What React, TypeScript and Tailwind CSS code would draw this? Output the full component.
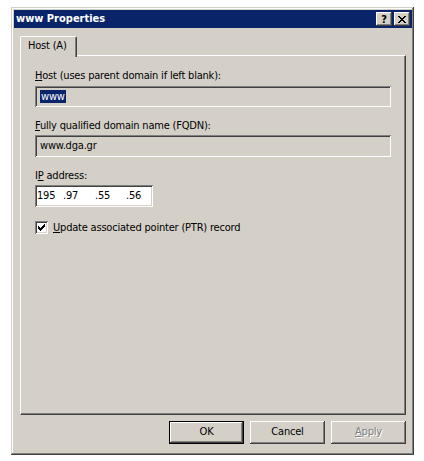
import React from 'react'

const raised =
  'shadow-[inset_-1px_-1px_#404040,inset_1px_1px_#ffffff,inset_-2px_-2px_#808080,inset_2px_2px_#d4d0c8]'
const sunken =
  'shadow-[inset_1px_1px_#808080,inset_-1px_-1px_#ffffff,inset_2px_2px_#404040,inset_-2px_-2px_#d4d0c8]'

function Label({ pre = '', k, rest }: { pre?: string; k: string; rest: string }) {
  return (
    <div className='h-[13px] leading-[13px] text-black whitespace-nowrap'>
      {pre}
      <span className='underline underline-offset-[1px]'>{k}</span>
      {rest}
    </div>
  )
}

export default function App() {
  return (
    <div className="w-[424px] h-[461px] bg-white overflow-hidden font-['DejaVu_Sans_Condensed','Liberation_Sans',Arial,sans-serif] text-[11px] tracking-[-0.2px] text-black">
      <div className='ml-[11px] mt-[7px] w-[403px] h-[448px] bg-[#d4d0c8] p-[3px] flex flex-col shadow-[inset_-1px_-1px_#404040,inset_1px_1px_#d4d0c8,inset_-2px_-2px_#808080,inset_2px_2px_#ffffff]'>
        {/* Title bar */}
        <div className='h-[18px] w-[398px] bg-[#0a246a] flex items-center pl-[2px] pr-[2px]'>
          <span className='text-white font-bold text-[11px] tracking-[0px] leading-[18px] flex-1'>www Properties</span>
          <div className={`w-[16px] h-[14px] bg-[#d4d0c8] ${raised} flex items-center justify-center font-bold text-[11px] tracking-normal leading-none`}>
            ?
          </div>
          <div className={`ml-[2px] w-[16px] h-[14px] bg-[#d4d0c8] ${raised} flex items-center justify-center`}>
            <svg width='8' height='7' viewBox='0 0 8 7'>
              <path d='M0 0h2v1h1v1h2V1h1V0h2v1H7v1H6v1H5v1h1v1h1v1h1v1H6V6H5V5H3v1H2v1H0V6h1V5h1V4h1V3H2V2H1V1H0z' fill='#000' />
            </svg>
          </div>
        </div>

        {/* Body */}
        <div className='pl-[6px] pt-[8px] flex flex-col'>
          {/* Tabs */}
          <div className='flex h-[20px] relative z-10 -mb-[1px]'>
            <div className='w-[57px] h-[21px] bg-[#d4d0c8] border-l border-t border-white border-r border-r-[#404040] rounded-tl-[2px] rounded-tr-[2px] pl-[7px] leading-[18px] whitespace-nowrap shadow-[inset_-1px_0_#808080]'>
              Host (A)
            </div>
          </div>

          {/* Panel */}
          <div className='w-[386px] h-[360px] border-t border-l border-white border-r border-b border-r-[#404040] border-b-[#404040] shadow-[inset_-1px_-1px_#808080] pl-[14px] pt-[13px] flex flex-col'>
            <Label k='H' rest='ost (uses parent domain if left blank):' />
            <div className={`mt-[4px] w-[356px] h-[21px] bg-[#d4d0c8] ${sunken} flex items-center pl-[5px]`}>
              <span className='bg-[#0a246a] text-white leading-[13px] px-[1px]'>www</span>
            </div>

            <div className='mt-[12px]'>
              <Label k='F' rest='ully qualified domain name (FQDN):' />
            </div>
            <div className={`mt-[3px] w-[356px] h-[22px] bg-[#d4d0c8] ${sunken} flex items-center pl-[5px]`}>
              www.dga.gr
            </div>

            <div className='mt-[12px]'>
              <Label pre='I' k='P' rest=' address:' />
            </div>
            <div className={`mt-[3px] w-[118px] h-[22px] bg-white ${sunken} flex items-center pl-[2px]`}>
              <span className='w-[26px]'>195</span>
              <span className='w-[3px]'>.</span>
              <span className='w-[29px]'>97</span>
              <span className='w-[3px]'>.</span>
              <span className='w-[28px]'>55</span>
              <span className='w-[3px]'>.</span>
              <span>56</span>
            </div>

            <div className='mt-[14px] flex items-center h-[13px]'>
              <div className={`w-[13px] h-[13px] bg-white ${sunken} flex items-center justify-center`}>
                <svg width='7' height='7' viewBox='0 0 7 7'>
                  <path d='M0 2h1v1h1v1h1V3h1V2h1V1h1V0h1v3H6v1H5v1H4v1H3v1H2V6H1V5H0z' fill='#000' />
                </svg>
              </div>
              <span className='ml-[5px] leading-[13px] whitespace-nowrap'>
                <span className='underline underline-offset-[1px]'>U</span>pdate associated pointer (PTR) record
              </span>
            </div>
          </div>

          {/* Buttons */}
          <div className='mt-[6px] w-[386px] flex justify-end gap-[6px]'>
            <div className='w-[75px] h-[23px] border border-black bg-[#d4d0c8] shadow-[inset_-1px_-1px_#404040,inset_1px_1px_#ffffff,inset_-2px_-2px_#808080] flex items-center justify-center'>
              OK
            </div>
            <div className={`w-[75px] h-[23px] bg-[#d4d0c8] ${raised} flex items-center justify-center`}>
              Cancel
            </div>
            <div className={`w-[75px] h-[23px] bg-[#d4d0c8] ${raised} flex items-center justify-center text-[#808080] [text-shadow:1px_1px_#ffffff]`}>
              <span>
                <span className='underline underline-offset-[1px]'>A</span>pply
              </span>
            </div>
          </div>
        </div>
      </div>
    </div>
  )
}
